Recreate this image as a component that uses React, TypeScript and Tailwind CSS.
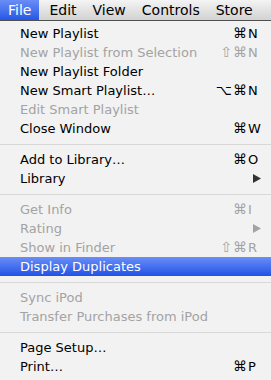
type Item =
  | { kind: "sep" }
  | {
      kind?: "item";
      label: string;
      mods?: string;
      keyName?: string;
      submenu?: boolean;
      disabled?: boolean;
      active?: boolean;
    };

const items: Item[] = [
  { label: "New Playlist", mods: "⌘", keyName: "N" },
  { label: "New Playlist from Selection", mods: "⇧⌘", keyName: "N", disabled: true },
  { label: "New Playlist Folder" },
  { label: "New Smart Playlist…", mods: "⌥⌘", keyName: "N" },
  { label: "Edit Smart Playlist", disabled: true },
  { label: "Close Window", mods: "⌘", keyName: "W" },
  { kind: "sep" },
  { label: "Add to Library…", mods: "⌘", keyName: "O" },
  { label: "Library", submenu: true },
  { kind: "sep" },
  { label: "Get Info", mods: "⌘", keyName: "I", disabled: true },
  { label: "Rating", submenu: true, disabled: true },
  { label: "Show in Finder", mods: "⇧⌘", keyName: "R", disabled: true },
  { label: "Display Duplicates", active: true },
  { kind: "sep" },
  { label: "Sync iPod", disabled: true },
  { label: "Transfer Purchases from iPod", disabled: true },
  { kind: "sep" },
  { label: "Page Setup…" },
  { label: "Print…", mods: "⌘", keyName: "P" },
];

const menus = ["File", "Edit", "View", "Controls", "Store"];

function Arrow({ color }: { color: string }) {
  return (
    <svg width="8" height="9" viewBox="0 0 8 9" className="ml-[5px]">
      <path d="M0 0 L8 4.5 L0 9 Z" fill={color} />
    </svg>
  );
}

export default function App() {
  return (
    <div
      className="w-[271px] h-[380px] overflow-hidden bg-[#f2f2f2] select-none"
      style={{ fontFamily: '"DejaVu Sans", "Liberation Sans", sans-serif' }}
    >
      {/* menu bar */}
      <div className="h-[21px] flex bg-gradient-to-b from-[#f4f4f4] to-[#d2d2d2] border-b border-[#4f4f4f]">
        {menus.map((m, i) => (
          <div
            key={m}
            className={`h-[20px] px-[8px] flex items-center text-[14px] ${
              i === 0 ? "bg-gradient-to-b from-[#6a8df6] to-[#2557e6] text-white mr-[2px]" : "text-black"
            }`}
          >
            {m}
          </div>
        ))}
      </div>

      {/* menu */}
      <div className="pt-[3px]">
        {items.map((it, i) => {
          if (it.kind === "sep") {
            return (
              <div key={i} className="h-[12px] flex items-center">
                <div className="w-full h-px bg-[#d8d8d8]" />
              </div>
            );
          }
          const color = it.active ? "text-white" : it.disabled ? "text-[#a3a3a3]" : "text-black";
          return (
            <div
              key={i}
              className={`h-[19px] flex items-center text-[13px] ${color} ${
                it.active ? "bg-gradient-to-b from-[#6a8df6] to-[#2052e6]" : ""
              }`}
            >
              <span className="flex-1 pl-[20px] whitespace-nowrap">{it.label}</span>
              <span className="text-right whitespace-nowrap text-[14px] tracking-[1px]">{it.mods ?? ""}</span>
              <span className="w-[23px] flex items-center">
                {it.keyName}
                {it.submenu && <Arrow color={it.disabled ? "#a3a3a3" : "#333"} />}
              </span>
            </div>
          );
        })}
      </div>
    </div>
  );
}
